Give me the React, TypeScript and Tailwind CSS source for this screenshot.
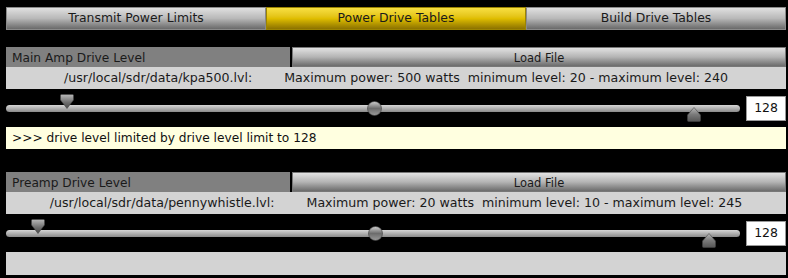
import React from 'react';

const font = { fontFamily: '"DejaVu Sans", Verdana, sans-serif' };

function DownThumb() {
  return (
    <svg width="14" height="15" viewBox="0 0 14 15">
      <defs>
        <linearGradient id="dt" x1="0" y1="0" x2="0" y2="1">
          <stop offset="0" stopColor="#b8b8b8" />
          <stop offset="0.6" stopColor="#6a6a6a" />
          <stop offset="1" stopColor="#4a4a4a" />
        </linearGradient>
      </defs>
      <path d="M1.5 0.5 H12.5 Q13.5 0.5 13.5 1.5 V6 L7 14.5 L0.5 6 V1.5 Q0.5 0.5 1.5 0.5 Z" fill="url(#dt)" stroke="#444" strokeWidth="0.6" />
    </svg>
  );
}

function UpThumb() {
  return (
    <svg width="14" height="15" viewBox="0 0 14 15">
      <defs>
        <linearGradient id="ut" x1="0" y1="0" x2="0" y2="1">
          <stop offset="0" stopColor="#b8b8b8" />
          <stop offset="0.5" stopColor="#7a7a7a" />
          <stop offset="1" stopColor="#555" />
        </linearGradient>
      </defs>
      <path d="M7 0.5 L13.5 8 V13.5 Q13.5 14.5 12.5 14.5 H1.5 Q0.5 14.5 0.5 13.5 V8 Z" fill="url(#ut)" stroke="#444" strokeWidth="0.6" />
    </svg>
  );
}

function Knob() {
  return (
    <svg width="15" height="15" viewBox="0 0 15 15">
      <defs>
        <linearGradient id="kn" x1="0" y1="0" x2="0" y2="1">
          <stop offset="0" stopColor="#d0d0d0" />
          <stop offset="0.5" stopColor="#6c6c6c" />
          <stop offset="1" stopColor="#9a9a9a" />
        </linearGradient>
      </defs>
      <circle cx="7.5" cy="7.5" r="7" fill="url(#kn)" stroke="#3a3a3a" strokeWidth="0.6" />
    </svg>
  );
}

type Thumbs = { down: number; knob: number; up: number; upTop: number };

function SliderRow({ t }: { t: Thumbs }) {
  return (
    <div className="flex items-center h-[38px] gap-[6px]">
      <div className="relative flex-1 h-[38px] flex items-center">
        <div className="w-full h-[7px] rounded-full bg-linear-to-b from-[#d6d6d6] via-[#b0b0b0] to-[#8a8a8a]" />
        <div className="absolute top-[5px]" style={{ left: t.down }}>
          <DownThumb />
        </div>
        <div className="absolute top-[12px]" style={{ left: t.knob }}>
          <Knob />
        </div>
        <div className="absolute" style={{ left: t.up, top: t.upTop }}>
          <UpThumb />
        </div>
      </div>
      <div className="w-[40px] h-[25px] bg-white border border-[#9a9a9a] flex items-center justify-end pr-[7px] text-[12.5px] text-[#111]">
        128
      </div>
    </div>
  );
}

function Section({ title, path, power, min, max, thumbs, message }: {
  title: string; path: string; power: string; min: number; max: number; thumbs: Thumbs; message?: string;
}) {
  return (
    <div>
      <div className="flex h-[20px] gap-[2px]">
        <div className="w-[284px] bg-[#808080] text-[12.2px] text-[#1a1a1a] pl-[6px] flex items-end leading-[17px]">
          {title}
        </div>
        <div className="flex-1 border border-[#777] bg-linear-to-b from-[#e2e2e2] via-[#b4b4b4] to-[#6c6c6c] flex items-end justify-center text-[11.5px] text-[#1a1a1a] leading-[16px]">
          Load File
        </div>
      </div>
      <div className="h-[22px] bg-[#d3d3d3] flex items-center justify-center gap-[32px] text-[12.6px] text-[#1a1a1a]">
        <span>{path}</span>
        <span className="whitespace-pre">{`Maximum power: ${power} watts  minimum level: ${min} - maximum level: ${max}`}</span>
      </div>
      <SliderRow t={thumbs} />
      {message !== undefined ? (
        <div className="h-[22px] bg-[#ffffe0] pl-[6px] flex items-center text-[12.2px] text-[#111]">{message}</div>
      ) : (
        <div className="h-[23px] bg-[#d3d3d3]" />
      )}
    </div>
  );
}

export default function App() {
  const tabs = ['Transmit Power Limits', 'Power Drive Tables', 'Build Drive Tables'];
  return (
    <div className="w-[788px] h-[278px] bg-black pt-[7px] pl-[6px] pr-[2px] overflow-hidden" style={font}>
      <div className="flex h-[23px]">
        {tabs.map((t, i) =>
          i === 1 ? (
            <div key={t} className="flex-1 border border-[#9c8400] bg-linear-to-b from-[#f8e040] via-[#e0be00] to-[#8c7200] flex items-center justify-center text-[12.4px] text-[#1a1a1a]">
              {t}
            </div>
          ) : (
            <div key={t} className="flex-1 border border-[#8a8a8a] bg-linear-to-b from-[#e0e0e0] via-[#b8b8b8] to-[#6a6a6a] flex items-center justify-center text-[12.4px] text-[#1a1a1a]">
              {t}
            </div>
          )
        )}
      </div>
      <div className="mt-[17px]">
        <Section
          title="Main Amp Drive Level"
          path="/usr/local/sdr/data/kpa500.lvl:"
          power="500"
          min={20}
          max={240}
          thumbs={{ down: 54, knob: 361, up: 681, upTop: 18 }}
          message=">>> drive level limited by drive level limit to 128"
        />
      </div>
      <div className="mt-[23px]">
        <Section
          title="Preamp Drive Level"
          path="/usr/local/sdr/data/pennywhistle.lvl:"
          power="20"
          min={10}
          max={245}
          thumbs={{ down: 25, knob: 362, up: 696, upTop: 19 }}
        />
      </div>
    </div>
  );
}
